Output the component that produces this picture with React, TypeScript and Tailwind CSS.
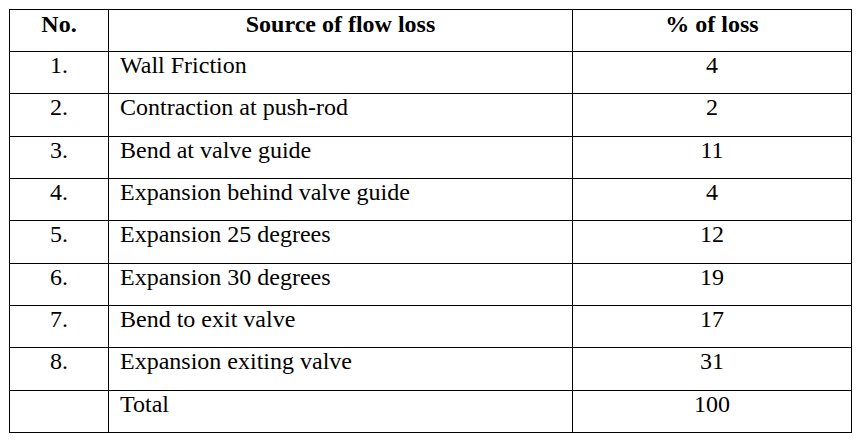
import React from "react";

const rows: [string, string, string][] = [
  ["1.", "Wall Friction", "4"],
  ["2.", "Contraction at push-rod", "2"],
  ["3.", "Bend at valve guide", "11"],
  ["4.", "Expansion behind valve guide", "4"],
  ["5.", "Expansion 25 degrees", "12"],
  ["6.", "Expansion 30 degrees", "19"],
  ["7.", "Bend to exit valve", "17"],
  ["8.", "Expansion exiting valve", "31"],
  ["", "Total", "100"],
];

const cell = "font-['Liberation_Serif',serif] text-[24px] leading-[24px] text-black";

export default function App() {
  return (
    <div className="w-[861px] h-[442px] bg-white pt-[9px] pl-[9px] font-serif">
      <div className="w-[843px] border border-black">
        <div className="grid grid-cols-[99px_464px_278px] h-[42px] border-b border-black">
          <div className={`${cell} font-bold border-r border-black text-center pt-[2px]`}>No.</div>
          <div className={`${cell} font-bold border-r border-black text-center pt-[2px]`}>Source of flow loss</div>
          <div className={`${cell} font-bold text-center pt-[2px]`}>% of loss</div>
        </div>
        {rows.map(([no, source, pct], i) => (
          <div
            key={i}
            className="grid grid-cols-[99px_464px_278px] h-[42.33px] border-b border-black last:border-b-0 last:h-[41.33px]"
          >
            <div className={`${cell} border-r border-black text-center pt-[1px]`}>{no}</div>
            <div className={`${cell} border-r border-black pl-[11px] pt-[1px]`}>{source}</div>
            <div className={`${cell} text-center pt-[1px]`}>{pct}</div>
          </div>
        ))}
      </div>
    </div>
  );
}
